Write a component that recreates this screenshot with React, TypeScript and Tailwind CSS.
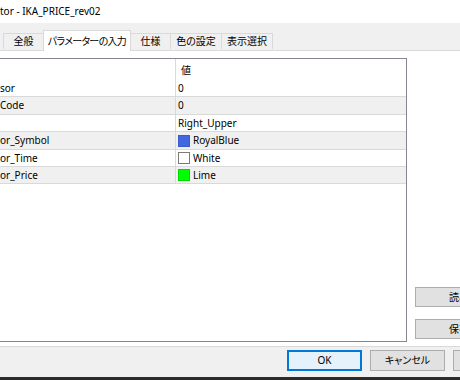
import React from 'react'

const latin = 'font-["Noto_Sans","Noto_Sans_CJK_JP",sans-serif]'

type Row = { label: string; value: string; swatch?: string; h: string; alt: boolean }

const rows: Row[] = [
  { label: 'sor', value: '0', h: 'h-[17px]', alt: false },
  { label: 'Code', value: '0', h: 'h-[18px]', alt: true },
  { label: '', value: 'Right_Upper', h: 'h-[17px]', alt: false },
  { label: 'or_Symbol', value: 'RoyalBlue', swatch: 'bg-[#4169e1] border-[#3a5cc8]', h: 'h-[18px]', alt: true },
  { label: 'or_Time', value: 'White', swatch: 'bg-white border-[#7a7a7a]', h: 'h-[17px]', alt: false },
  { label: 'or_Price', value: 'Lime', swatch: 'bg-[#00ff00] border-[#00d800]', h: 'h-[17px]', alt: true },
]

function Tab({ label, w, selected, edge }: { label: string; w: string; selected?: boolean; edge: string }) {
  if (selected) {
    return (
      <div className={`${w} h-[21px] -mb-px bg-white border border-b-0 border-[#d9d9d9] flex items-center justify-center relative z-10 tracking-[-0.7px]`}>
        {label}
      </div>
    )
  }
  return (
    <div className={`${w} h-[16px] mb-px bg-[#f0f0f0] border-t ${edge} border-[#d9d9d9] flex items-center justify-center`}>
      {label}
    </div>
  )
}

export default function App() {
  return (
    <div className={`w-[460px] h-[380px] overflow-hidden bg-[#f0f0f0] flex flex-col text-[10px] text-black ${latin} [font-feature-settings:'palt']`}>
      {/* タイトルバー */}
      <div className="h-[23px] bg-white flex items-center shrink-0">tor - IKA_PRICE_rev02</div>

      {/* タブ */}
      <div className="h-[27px] shrink-0 flex items-end pl-[3px] relative z-10">
        <Tab label="全般" w="w-[40px]" edge="border-l" />
        <Tab label="パラメーターの入力" w="w-[88px]" selected edge="" />
        <Tab label="仕様" w="w-[40px]" edge="border-r" />
        <Tab label="色の設定" w="w-[51px]" edge="border-r" />
        <Tab label="表示選択" w="w-[51px]" edge="border-r" />
      </div>

      {/* パネル */}
      <div className="h-[297px] shrink-0 bg-white border-t border-b border-[#d9d9d9] flex">
        <div className="w-[407px] h-[284px] shrink-0 mt-[7px] border-t border-r border-b border-[#828790] flex flex-col">
          <div className="h-[21px] flex">
            <div className="w-[176px] border-r border-[#d9d9d9]" />
            <div className="flex-1 flex items-center pl-[5px] pt-[2px]">値</div>
          </div>
          {rows.map((r, i) => (
            <div key={i} className={`${r.h} flex border-b border-[#d9d9d9] ${r.alt ? 'bg-[#f0f0f0]' : 'bg-white'}`}>
              <div className="w-[176px] border-r border-[#d9d9d9] flex items-center">{r.label}</div>
              <div className="flex-1 flex items-center pl-[2px] gap-[3px]">
                {r.swatch && <span className={`w-[12px] h-[12px] border ${r.swatch}`} />}
                <span>{r.value}</span>
              </div>
            </div>
          ))}
        </div>
        <div className="ml-[8px] shrink-0 pt-[236px] flex flex-col gap-[12px]">
          <div className="w-[90px] h-[20px] bg-[#e1e1e1] border border-[#adadad] flex items-center pl-[33px]">読み込み</div>
          <div className="w-[90px] h-[20px] bg-[#e1e1e1] border border-[#adadad] flex items-center pl-[33px]">保存</div>
        </div>
      </div>

      {/* 下部ボタン */}
      <div className="h-[30px] shrink-0 flex items-start pl-[287px] pt-[3px] gap-[8px]">
        <div className="w-[75px] h-[21px] shrink-0 bg-[#e5f1fb] border border-[#0078d7] shadow-[inset_0_0_0_1px_#0078d7] flex items-center justify-center">OK</div>
        <div className="w-[75px] h-[21px] shrink-0 bg-[#e1e1e1] border border-[#adadad] flex items-center justify-center">キャンセル</div>
        <div className="w-[75px] h-[21px] shrink-0 bg-[#e1e1e1] border border-[#adadad]" />
      </div>
      <div className="h-[3px] shrink-0 bg-[#2b2b2b]" />
    </div>
  )
}
